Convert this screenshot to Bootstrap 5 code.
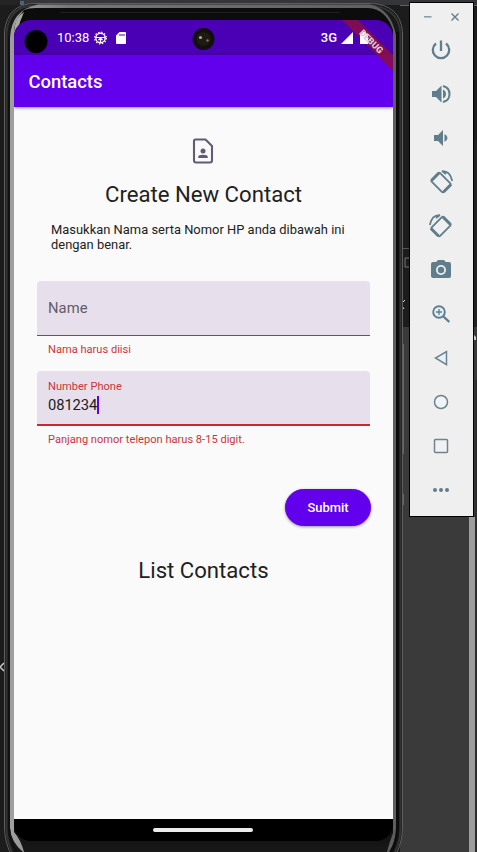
<!DOCTYPE html>
<html lang="id">
<head>
<meta charset="utf-8">
<meta name="viewport" content="width=device-width, initial-scale=1">
<title>Contacts</title>
<link href="https://cdn.jsdelivr.net/npm/bootstrap@5.3.0/dist/css/bootstrap.min.css" rel="stylesheet">
<style>
body{width:477px;height:852px;background:#1e1e1e;font-family:Roboto,sans-serif;color:#212121}
.desk{width:477px;height:852px}
.backdrop{left:0;top:0;z-index:0}
.phone{width:379px;height:821px;margin:20px 16px 0 14px;border-radius:17px;background:#000;z-index:1}
.statusbar{height:35px;background:#4a00b4;color:#fff;font-size:13px;line-height:35px;padding-left:43px;padding-right:40px}
.sdcard{margin-left:9px}
.network{font-weight:500}
.appbar{height:52px;background:#6200ee;color:#fff;font-size:18.4px;font-weight:500;padding-left:14.5px;padding-top:2px;box-shadow:0 1px 3px rgba(0,0,0,.45);z-index:2}
.sheet{height:712px;background:#fafafa;padding:0 23px}
.doc-icon{margin-top:31px;transform:translateX(-1px)}
.headline{font-size:22.15px;line-height:30px;font-weight:400}
.first-headline{margin-top:15px}
.list-headline{margin-top:29px}
.intro{font-size:12.9px;line-height:15px;letter-spacing:.02px;margin:13px 14px 0}
.contact-form{margin-top:29px}
.field{height:55px;background:#e7e0ec;border-radius:4px 4px 0 0;border-bottom:1px solid #cb2830;padding:0 11px;font-size:14.75px;letter-spacing:.05px}
.field.focused{border-bottom-width:2px;margin-top:15px}
.field-label{color:#615b68}
.float-label{font-size:11.06px;line-height:13px;color:#cb353a;padding-top:9px;letter-spacing:.03px}
.value{line-height:18px;margin-top:3px;color:#1d1b20;letter-spacing:-.1px}
.caret{width:2px;height:18px;background:#6200ee}
.hint{font-size:11.06px;line-height:13px;letter-spacing:.02px;color:#cb353a;margin:7px 11px 0}
.submit{--bs-btn-bg:#6200ee;--bs-btn-color:#fff;--bs-btn-border-color:#6200ee;width:86px;height:37px;margin:43px -1px 0 0;padding:0;font-size:12.9px;font-weight:500;letter-spacing:.02px;box-shadow:0 1px 3px rgba(0,0,0,.4)}
.gesture{height:22px;padding-right:1px}
.pill{width:100px;height:4px;background:#ececec;border-radius:2px}
.over{left:0;top:0;z-index:3}
.toolbar{width:65px;height:515px;margin-top:2px;border:1px solid #000;background:#efefef;z-index:1}
.winbar{height:25px;padding:3px 14px 0 14px}
.tool{height:44px;padding-right:2px}
</style>
</head>
<body class="m-0 overflow-hidden">
<main class="desk position-relative d-flex align-items-start">
  <svg class="backdrop position-absolute" width="477" height="852" aria-hidden="true">
    <defs>
      <linearGradient id="rim" x1="0" x2="1" y1="0" y2="0"><stop offset="0" stop-color="#a0a0a0"/><stop offset=".15" stop-color="#777"/><stop offset="1" stop-color="#5e5e5e"/></linearGradient>
      <linearGradient id="chin" x1="0" x2="0" y1="0" y2="1"><stop offset="0" stop-color="#0b0b0b"/><stop offset="1" stop-color="#191919"/></linearGradient>
    </defs>
    <rect width="477" height="852" fill="#1c1c1c"/>
    <rect width="477" height="5" fill="#35363a"/>
    <rect width="20" height="5" fill="#242424"/>
    <path d="M20 1h4v4h-4z" fill="#47667b"/>
    <path d="M400 5.500h10M473 5.500h4" stroke="#606060"/>
    <rect x="400" y="327" width="77" height="525" fill="#3a3a3a"/>
    <path d="M402 248.500h8M473 248.500h4" stroke="#555"/>
    <path d="M410 258h-5v9h5" fill="none" stroke="#777"/>
    <path d="M402 303l3-3M402 306l2 3" stroke="#ddd"/>
    <path d="M403.500 344v110M403.500 494v11" stroke="#666"/>
    <rect x="474" y="140" width="3" height="187" fill="#222"/>
    <path d="M474 335l2 2v3h-2z" fill="#ccc"/>
    <rect x="469" y="517" width="6" height="335" fill="#9d9d9d"/>
    <rect x="475" y="380" width="2" height="472" fill="#2d2d2d"/>
    <path d="M4 663l-4 4 4 4" fill="none" stroke="#ccc" stroke-width="1.500"/>
    <path d="M10 852Q5 842 4.500 828V32Q7 4 35 3.500H370Q400 4 402.500 32V828Q402 842 397 852" fill="#181818" stroke="#5f5f5f"/>
    <path d="M12 852Q7 842 6.500 828V33Q9 5 36 5.500H368Q398 6 400.500 33V828Q400 842 395 852" fill="none" stroke="#333" stroke-width="2"/>
    <path d="M10 828V38Q11 10 38 4.500H370Q392 9 396.500 38V826Q396 842 389 852H23Q11 842 10 828Z" fill="url(#rim)"/>
    <path d="M14 44V30Q15 20 24 10Q28 8 36 8H368Q386 9 393 30V44Z" fill="#0c0c0c"/>
    <path d="M60 12.500H340" stroke="#202020"/>
    <path d="M14 44V32Q15 17 24 12L20 22Z" fill="#aaa"/>
    <path d="M14 820H393V833Q389 844 387 852H24Q21 840 14 832Z" fill="url(#chin)"/>
    <path d="M397.500 32V828Q397 842 391 852" fill="none" stroke="#0d0d0d" stroke-width="3"/>
    <path d="M9 36V828Q10 842 17 852" fill="none" stroke="#111" stroke-width="2"/>
  </svg>

  <section class="phone position-relative overflow-hidden flex-shrink-0 d-flex flex-column">
    <div class="statusbar d-flex align-items-center">
      <span>10:38</span>
      <svg class="ms-1" width="14" height="14" viewBox="0 0 14 14" fill="none" stroke="#fff"><circle cx="7.500" cy="7" r="4.700" stroke-width="1.500"/><circle cx="7.500" cy="7" r="5.900" stroke-width="1.100" stroke-dasharray="1.400 1.690"/><path d="M3 6.500h9M7.500 7v4M5.500 9l2-2 2 2" stroke-width="1.200"/></svg>
      <svg class="sdcard" width="10" height="12" viewBox="0 0 10 12"><path fill="#fff" fill-rule="evenodd" d="M3.500 0H9q1 0 1 1v10q0 1-1 1H1q-1 0-1-1V3.500zM3.500 2v2h1V2zm2 0v2h1V2zm2 0v2h1V2z"/></svg>
      <span class="network ms-auto">3G</span>
      <svg class="ms-1" width="12" height="12" viewBox="0 0 12 12"><path fill="#fff" d="M12 0v12H0z"/></svg>
    </div>
    <header class="appbar d-flex align-items-center position-relative">Contacts</header>
    <div class="sheet d-flex flex-column">
      <svg class="doc-icon mx-auto flex-shrink-0" width="22" height="26" viewBox="0 0 22 26" fill="none" stroke="#625b71" stroke-width="2.100"><path d="M3.500 1.500H13.500L20 8V22.500Q20 24.500 18 24.500H4Q2 24.500 2 22.500V3Q2 1.500 3.500 1.500Z" stroke-linejoin="round"/><circle cx="11" cy="13" r="2.500" fill="#625b71" stroke="none"/><path d="M6.200 20v-1q0-2.300 4.800-2.300t4.800 2.300v1z" fill="#625b71" stroke="none"/></svg>
      <h1 class="headline first-headline text-center mb-0">Create New Contact</h1>
      <p class="intro">Masukkan Nama serta Nomor HP anda dibawah ini dengan benar.</p>
      <form class="contact-form d-flex flex-column">
        <div class="field d-flex align-items-center"><span class="field-label">Name</span></div>
        <div class="hint">Nama harus diisi</div>
        <div class="field focused">
          <div class="float-label">Number Phone</div>
          <div class="value d-flex align-items-center">081234<span class="caret"></span></div>
        </div>
        <div class="hint">Panjang nomor telepon harus 8-15 digit.</div>
        <button type="button" class="btn submit rounded-pill align-self-end">Submit</button>
      </form>
      <h2 class="headline list-headline text-center mb-0">List Contacts</h2>
    </div>
    <div class="gesture d-flex justify-content-center align-items-center"><div class="pill"></div></div>
    <svg class="over position-absolute" width="379" height="90" aria-hidden="true">
      <circle cx="22" cy="21.500" r="11.500" fill="#000"/>
      <circle cx="189.500" cy="19" r="11" fill="#12100f"/>
      <circle cx="189.500" cy="19" r="7" fill="#1d1b14"/>
      <circle cx="186.500" cy="17.500" r="1.600" fill="#aaa5a0"/><circle cx="193.500" cy="20.500" r="1.200" fill="#8d7c24"/>
      <path d="M328 0H344L379 35V51Z" fill="#8a0f42" fill-opacity=".85"/>
      <path fill="#fff" transform="translate(346 12)" d="M2.500 0h3v1.500H8V12H0V1.500h2.500z"/>
      <text transform="translate(357.500 21.500) rotate(45)" text-anchor="middle" y="3.300" font-family="Roboto" font-size="9.200" font-weight="900" fill="#dcc6d6">DEBUG</text>
    </svg>
  </section>

  <aside class="toolbar position-relative flex-shrink-0">
    <div class="winbar d-flex justify-content-between align-items-center">
      <svg width="8" height="8" stroke="#8798a1" stroke-width="1.500"><path d="M0 3.800h7.500"/></svg>
      <svg width="8" height="8" stroke="#607d8b" stroke-width="1.400"><path d="M.5.500l7 7M7.500.500l-7 7"/></svg>
    </div>
    <div class="tool d-flex justify-content-center align-items-center"><svg width="24" height="24" viewBox="0 0 24 24" fill="none" stroke="#607d8b" stroke-width="2.300"><path d="M12 2.500v10.500M7 5.500a8.200 8.200 0 1 0 10 0"/></svg></div>
    <div class="tool d-flex justify-content-center align-items-center"><svg width="24" height="24" viewBox="0 0 24 24" fill="#607d8b"><path d="M3 9v6h4l5.500 5.500v-17L7 9z"/><path d="M14 7.500q3 1.500 3 4.500t-3 4.500z"/><path d="M14 4q6.500 1.500 6.500 8T14 20" fill="none" stroke="#607d8b" stroke-width="2"/></svg></div>
    <div class="tool d-flex justify-content-center align-items-center"><svg width="24" height="24" viewBox="0 0 24 24" fill="#607d8b"><path d="M5 9v6h4l5 5V4L9 9zM15.500 8v8q3-1.500 3-4t-3-4z"/></svg></div>
    <div class="tool d-flex justify-content-center align-items-center"><svg width="26" height="26" viewBox="0 0 26 26" fill="none" stroke="#607d8b"><rect x="4.500" y="7.500" width="17" height="12" rx="1.300" stroke-width="1.800" transform="rotate(45 13 13.500)"/><path d="M3.500 11.500l7.500-7.500M15.500 23l7.500-7.500" stroke-width="3"/><path d="M14 2.200q8-.5 10.200 9.800M14 2l4 3" stroke-width="1.700"/></svg></div>
    <div class="tool d-flex justify-content-center align-items-center"><svg width="26" height="26" viewBox="0 0 26 26" fill="none" stroke="#607d8b"><g transform="matrix(-1 0 0 1 26 0)"><rect x="4.500" y="7.500" width="17" height="12" rx="1.300" stroke-width="1.800" transform="rotate(45 13 13.500)"/><path d="M3.500 11.500l7.500-7.500M15.500 23l7.500-7.500" stroke-width="3"/><path d="M14 2.200q8-.5 10.200 9.800M14 2l4 3" stroke-width="1.700"/></g></svg></div>
    <div class="tool d-flex justify-content-center align-items-center"><svg width="24" height="24" viewBox="0 0 24 24" fill="#607d8b"><path d="M9 2L7.200 4H4Q2 4 2 6v12q0 2 2 2h16q2 0 2-2V6q0-2-2-2h-3.200L15 2z"/><circle cx="12" cy="12" r="5" fill="#efefef"/><circle cx="12" cy="12" r="3.200"/></svg></div>
    <div class="tool d-flex justify-content-center align-items-center"><svg width="24" height="24" viewBox="0 0 24 24" fill="none" stroke="#607d8b"><circle cx="10" cy="10" r="5.800" stroke-width="1.900" fill="#e3f0f8"/><path d="M14.500 14.500l5.800 5.500" stroke-width="2.400"/><path d="M7 10h6M10 7v6" stroke-width="1.300"/></svg></div>
    <div class="tool d-flex justify-content-center align-items-center"><svg width="24" height="24" viewBox="0 0 24 24"><path d="M17.500 5.500v13.200L6.500 12z" fill="#e3f2fd" stroke="#6f828b" stroke-width="1.500"/></svg></div>
    <div class="tool d-flex justify-content-center align-items-center"><svg width="24" height="24" viewBox="0 0 24 24"><circle cx="12" cy="12" r="6.500" fill="#eef4f8" stroke="#6f828b" stroke-width="1.500"/></svg></div>
    <div class="tool d-flex justify-content-center align-items-center"><svg width="24" height="24" viewBox="0 0 24 24"><rect x="5.500" y="5.500" width="13" height="13" rx="1" fill="#eef2f5" stroke="#6f828b" stroke-width="1.500"/></svg></div>
    <div class="tool d-flex justify-content-center align-items-center"><svg width="24" height="24" viewBox="0 0 24 24" fill="#607d8b"><circle cx="6" cy="12" r="2"/><circle cx="12" cy="12" r="2"/><circle cx="18" cy="12" r="2"/></svg></div>
  </aside>
</main>
<script src="https://cdn.jsdelivr.net/npm/bootstrap@5.3.0/dist/js/bootstrap.bundle.min.js"></script>
</body>
</html>
